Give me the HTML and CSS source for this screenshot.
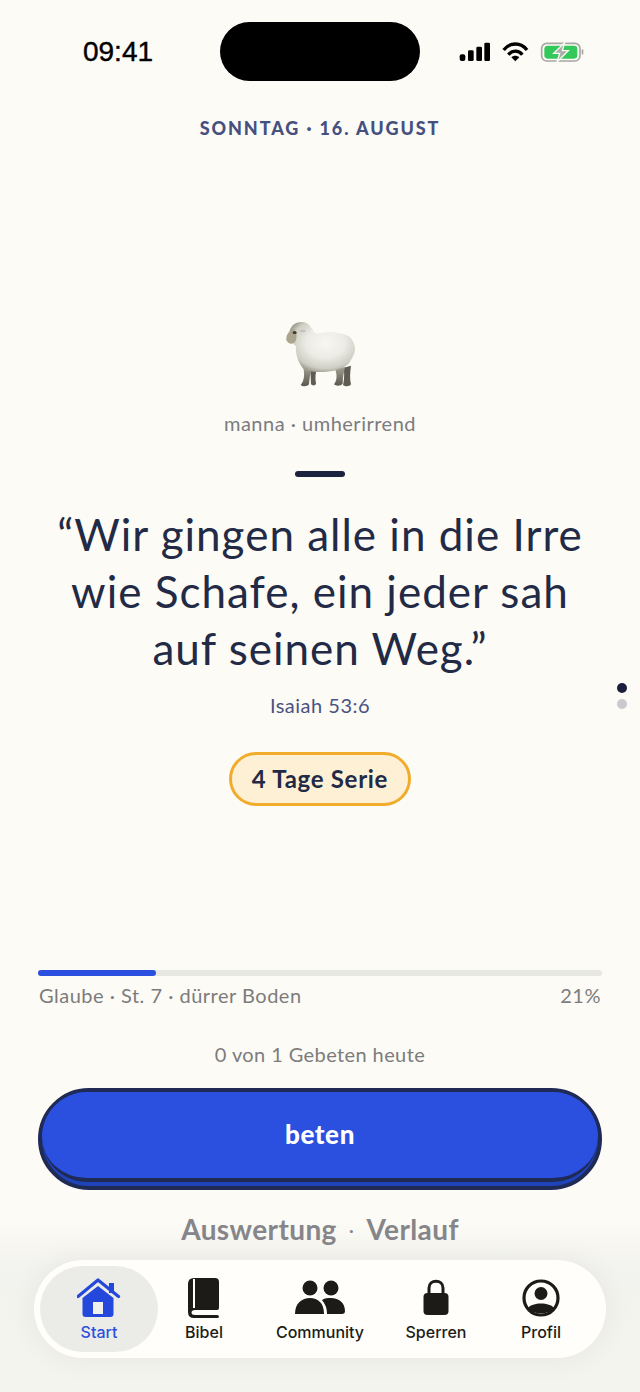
FILE: index.html
```html
<!DOCTYPE html>
<html lang="de">
<head>
  <meta charset="UTF-8">
  <meta name="viewport" content="width=device-width, initial-scale=1.0">
  <title>Manna</title>
  <link rel="stylesheet" href="styles.css">
</head>
<body>
  <div class="screen">

    <!-- Status bar -->
    <div class="status-bar">
      <span class="time">09:41</span>
      <div class="island"></div>
      <svg class="status-icons" viewBox="50 60 385 72" aria-hidden="true">
        <rect x="58" y="103" width="17" height="20" rx="6" fill="#000"/>
        <rect x="83" y="91" width="17" height="32" rx="4" fill="#000"/>
        <rect x="108" y="80" width="17" height="43" rx="4" fill="#000"/>
        <rect x="132" y="68" width="17" height="55" rx="4" fill="#000"/>
        <path d="M190 90 C208 66 242 66 260 90" fill="none" stroke="#000" stroke-width="10"/>
        <path d="M204 104 C215 90 235 90 246 104" fill="none" stroke="#000" stroke-width="10"/>
        <path d="M213 112 C220 106 230 106 237 112 L225 124 Z" fill="#000"/>
        <rect x="304" y="70" width="115" height="53" rx="15" fill="none" stroke="#a5a8a3" stroke-width="5"/>
        <rect x="312" y="77" width="99" height="39" rx="10" fill="#34c759"/>
        <path d="M373 68 L340 100 H358 L350 126 L384 92 H366 Z" fill="#a9aca8" stroke="#fcfbf6" stroke-width="4"/>
        <rect x="424" y="88" width="5" height="16" rx="2.5" fill="#a5a8a3"/>
      </svg>
    </div>

    <div class="date">SONNTAG · 16. AUGUST</div>

    <!-- Verse of the day -->
    <div class="verse">
      <svg class="sheep" viewBox="255 60 216 204" aria-label="Schaf">
        <defs>
          <radialGradient id="wool" cx="0.55" cy="0.42" r="0.6">
            <stop offset="0" stop-color="#f8f7f3"/>
            <stop offset="0.5" stop-color="#ecebe4"/>
            <stop offset="0.85" stop-color="#cfcec4"/>
            <stop offset="1" stop-color="#9f9e92"/>
          </radialGradient>
          <linearGradient id="leg" x1="0" y1="0" x2="0" y2="1">
            <stop offset="0" stop-color="#a5a195"/>
            <stop offset="0.6" stop-color="#77746a"/>
            <stop offset="1" stop-color="#5c594f"/>
          </linearGradient>
          <filter id="soft" x="-5%" y="-5%" width="110%" height="110%">
            <feGaussianBlur stdDeviation="1.2"/>
          </filter>
        </defs>
        <g filter="url(#soft)">
          <path d="M332 200 C336 218 335 236 336 250 C341 255 349 254 351 248 C348 232 349 216 354 203 Z" fill="#5f5c52"/>
          <path d="M434 200 C437 220 435 240 432 252 C440 258 452 257 456 250 C452 234 453 216 456 194 Z" fill="#5f5c52"/>
          <path d="M312 196 C318 220 316 240 305 252 C311 258 326 257 330 250 C331 234 334 216 338 202 Z" fill="url(#leg)"/>
          <path d="M408 204 C416 224 413 240 405 250 C411 256 426 255 431 248 C431 232 434 216 438 198 Z" fill="url(#leg)"/>
          <path d="M272 90 C278 60 320 54 334 76 C341 87 345 94 352 98 C385 90 432 92 452 108 C466 120 470 140 467 154 C463 165 458 176 448 188 C420 216 350 218 316 206 C300 190 288 160 291 136 C281 128 274 112 272 90 Z" fill="url(#wool)"/>
          <path d="M277 86 C292 84 295 100 291 117 C287 132 267 131 262 117 C260 104 268 93 277 86 Z" fill="#aca58d"/>
        </g>
        <ellipse cx="287" cy="95" rx="6" ry="4" fill="#38352e"/>
        <ellipse cx="311" cy="90" rx="9" ry="4" fill="#bfc1bc"/>
      </svg>
      <div class="verse-label">manna · umherirrend</div>
      <div class="divider"></div>
      <p class="quote">“Wir gingen alle in die Irre<br>wie Schafe, ein jeder sah<br>auf seinen Weg.”</p>
      <div class="reference">Isaiah 53:6</div>
      <div class="streak">4 Tage Serie</div>
    </div>

    <!-- Page dots -->
    <div class="page-dots">
      <span class="dot dot-active"></span>
      <span class="dot"></span>
    </div>

    <!-- Progress + action -->
    <div class="progress-track"><div class="progress-fill"></div></div>
    <div class="progress-labels">
      <span>Glaube · St. 7 · dürrer Boden</span>
      <span>21%</span>
    </div>
    <div class="prayer-count">0 von 1 Gebeten heute</div>
    <button class="pray-btn"><span class="pray-face">beten</span></button>
    <div class="links">
      <a href="#">Auswertung</a>
      <span class="link-sep">·</span>
      <a href="#">Verlauf</a>
    </div>

    <!-- Tab bar -->
    <nav class="tabbar">
      <a class="tab tab-active" href="#">
        <svg class="tab-icon" width="44" height="40" viewBox="0 0 44 40">
          <path d="M5.500 20 L21 8 L36.500 20 V36 Q36.500 39 33.500 39 H8.500 Q5.500 39 5.500 36 Z" fill="#2448dc"/>
          <rect x="16" y="24" width="10" height="12" fill="#f0f0ec"/>
          <path d="M1 18.500 L21 2 L41.500 18.500" fill="none" stroke="#2448dc" stroke-width="3.200" stroke-linecap="round" stroke-linejoin="round"/>
          <rect x="32" y="5" width="5" height="10" fill="#2448dc"/>
        </svg>
        <span>Start</span>
      </a>
      <a class="tab" href="#">
        <svg class="tab-icon" width="32" height="40" viewBox="0 0 32 40">
          <path d="M6 0 H27 Q31 0 31 4 V30 Q31 32 29 32 H7 Q3.500 32 3.500 34.500 Q3.500 37 7 37 H29 Q31 37 31 38.500 Q31 40 29 40 H6 Q0 40 0 34 V6 Q0 0 6 0 Z" fill="#1c1b17"/>
          <rect x="5" y="1" width="2" height="29" fill="#fffefa"/>
        </svg>
        <span>Bibel</span>
      </a>
      <a class="tab" href="#">
        <svg class="tab-icon" width="50" height="40" viewBox="0 0 50 40">
          <circle cx="15" cy="10" r="7.500" fill="#1c1b17"/>
          <circle cx="36" cy="10" r="7.500" fill="#1c1b17"/>
          <path d="M0 36 C0 25 7 20 15 20 C23 20 29 25 29 36 Z" fill="#1c1b17"/>
          <path d="M32 36 C32 28 29 25 27 22 C30 20 33 20 36 20 C44 20 50 25 50 33 Q50 36 47 36 Z" fill="#1c1b17"/>
        </svg>
        <span>Community</span>
      </a>
      <a class="tab" href="#">
        <svg class="tab-icon" width="26" height="40" viewBox="0 0 26 40">
          <path d="M6 16 V10 C6 1 20 1 20 10 V16" fill="none" stroke="#1c1b17" stroke-width="3"/>
          <rect x="0.500" y="15" width="25" height="22" rx="4" fill="#1c1b17"/>
        </svg>
        <span>Sperren</span>
      </a>
      <a class="tab" href="#">
        <svg class="tab-icon" width="38" height="40" viewBox="0 0 38 40">
          <circle cx="19" cy="20" r="17" fill="#fffefa" stroke="#1c1b17" stroke-width="3.200"/>
          <circle cx="19" cy="15.500" r="6.500" fill="#1c1b17"/>
          <path d="M6 30 C10 24 28 24 32 30 C28 37 10 37 6 30 Z" fill="#1c1b17"/>
        </svg>
        <span>Profil</span>
      </a>
    </nav>
  </div>
</body>
</html>
```

FILE: styles.css
```css
/* General Styles */
* {
  box-sizing: border-box;
}

body {
  margin: 0;
  background: #fcfbf6;
  font-family: 'Lato', sans-serif;
}

.screen {
  position: relative;
  width: 640px;
  height: 1392px;
  overflow: hidden;
  display: flex;
  flex-direction: column;
  align-items: center;
  padding: 22px 38px 0;
  background: linear-gradient(to bottom, #fcfbf6 1220px, #f2f2ee 1270px, #f4f4ef 1392px);
}

/* Status bar */
.status-bar {
  width: 640px;
  margin: 0 -38px;
  height: 59px;
  display: grid;
  grid-template-columns: 220px 200px 220px;
  align-items: center;
}

.time {
  font-family: 'Liberation Sans', sans-serif;
  font-size: 28px;
  color: #000;
  text-align: center;
  padding-left: 16px;
  margin-top: 1px;
  -webkit-text-stroke: 0.4px #000;
}

.island {
  height: 59px;
  background: #000;
  border-radius: 30px;
}

.status-icons {
  width: 128.33px;
  height: 24px;
  margin-left: 36.67px;
}

.date {
  margin-top: 36px;
  font-size: 18px;
  line-height: 22px;
  font-weight: 900;
  letter-spacing: 1.9px;
  color: #46507f;
}

/* Verse */
.verse {
  margin-top: 182px;
  display: flex;
  flex-direction: column;
  align-items: center;
}

.sheep {
  width: 72px;
  height: 68px;
  display: block;
}

.verse-label {
  margin-top: 22px;
  font-size: 20px;
  line-height: 24px;
  letter-spacing: 0.5px;
  color: #7b7b80;
}

.divider {
  margin-top: 36px;
  width: 50px;
  height: 6px;
  border-radius: 3px;
  background: #1b2340;
}

.quote {
  margin: 29px 0 0;
  font-size: 44px;
  line-height: 57px;
  text-align: center;
  letter-spacing: 1px;
  color: #222a45;
  white-space: nowrap;
}

.reference {
  margin-top: 15px;
  font-size: 20px;
  line-height: 26px;
  letter-spacing: 0.5px;
  color: #4a5280;
}

.streak {
  margin-top: 34px;
  width: 182px;
  height: 54px;
  padding-bottom: 2px;
  border: 3px solid #f2ac2c;
  border-radius: 27px;
  background: #fdf0d5;
  display: flex;
  align-items: center;
  justify-content: center;
  font-size: 24px;
  font-weight: 700;
  letter-spacing: 0.7px;
  color: #222a45;
}

/* Page dots */
.page-dots {
  position: absolute;
  right: 13px;
  top: 683px;
  display: flex;
  flex-direction: column;
  gap: 6px;
}

.dot {
  width: 10px;
  height: 10px;
  border-radius: 50%;
  background: #c9c9cf;
}

.dot-active {
  background: #1b1f3d;
}

/* Progress */
.progress-track {
  margin-top: 164px;
  width: 100%;
  height: 6px;
  border-radius: 3px;
  background: #e8e8e2;
}

.progress-fill {
  width: 21%;
  height: 100%;
  border-radius: 3px;
  background: #2b50e0;
}

.progress-labels {
  margin-top: 7px;
  width: 100%;
  padding: 0 1px;
  display: flex;
  justify-content: space-between;
  font-size: 20px;
  line-height: 24px;
  letter-spacing: 0.5px;
  color: #7c7c7c;
}

.prayer-count {
  margin-top: 35px;
  font-size: 20px;
  line-height: 24px;
  letter-spacing: 0.4px;
  color: #7c7c7c;
}

/* Button */
.pray-btn {
  margin-top: 22px;
  width: 100%;
  height: 102px;
  padding: 0 0 4px;
  border: 4px solid #1f2a55;
  border-radius: 51px;
  background: #1f43b8;
  font-family: inherit;
  display: block;
}

.pray-face {
  display: flex;
  align-items: center;
  justify-content: center;
  height: 100%;
  padding-bottom: 2px;
  border-radius: 47px;
  border-bottom: 4px solid #1f2a55;
  background: #2b50e0;
  color: #fff;
  font-size: 26px;
  font-weight: 900;
  letter-spacing: 0.6px;
}

.links {
  margin-top: 22px;
  display: flex;
  align-items: center;
  gap: 12px;
  font-size: 28px;
  line-height: 34px;
  font-weight: 700;
  letter-spacing: 0.4px;
  color: #85858a;
}

.links a {
  color: inherit;
  text-decoration: none;
}

.link-sep {
  font-weight: 400;
  font-size: 20px;
}

/* Tab bar */
.tabbar {
  margin-top: 14px;
  width: 572px;
  height: 98px;
  padding: 6px;
  flex-shrink: 0;
  display: grid;
  grid-template-columns: 118px 92px 140px 92px 118px;
  border-radius: 49px;
  background: #fffefa;
  box-shadow: 0 0 30px rgba(0, 0, 0, 0.06);
}

.tab {
  display: flex;
  flex-direction: column;
  align-items: center;
  padding-top: 12px;
  border-radius: 43px;
  font-family: 'Inter', sans-serif;
  font-size: 16px;
  line-height: 20px;
  font-weight: 500;
  color: #1c1b17;
  text-decoration: none;
}

.tab-icon {
  display: block;
  margin-bottom: 4px;
}

.tab-active {
  background: #ebebe7;
  color: #2b50e0;
}
```
